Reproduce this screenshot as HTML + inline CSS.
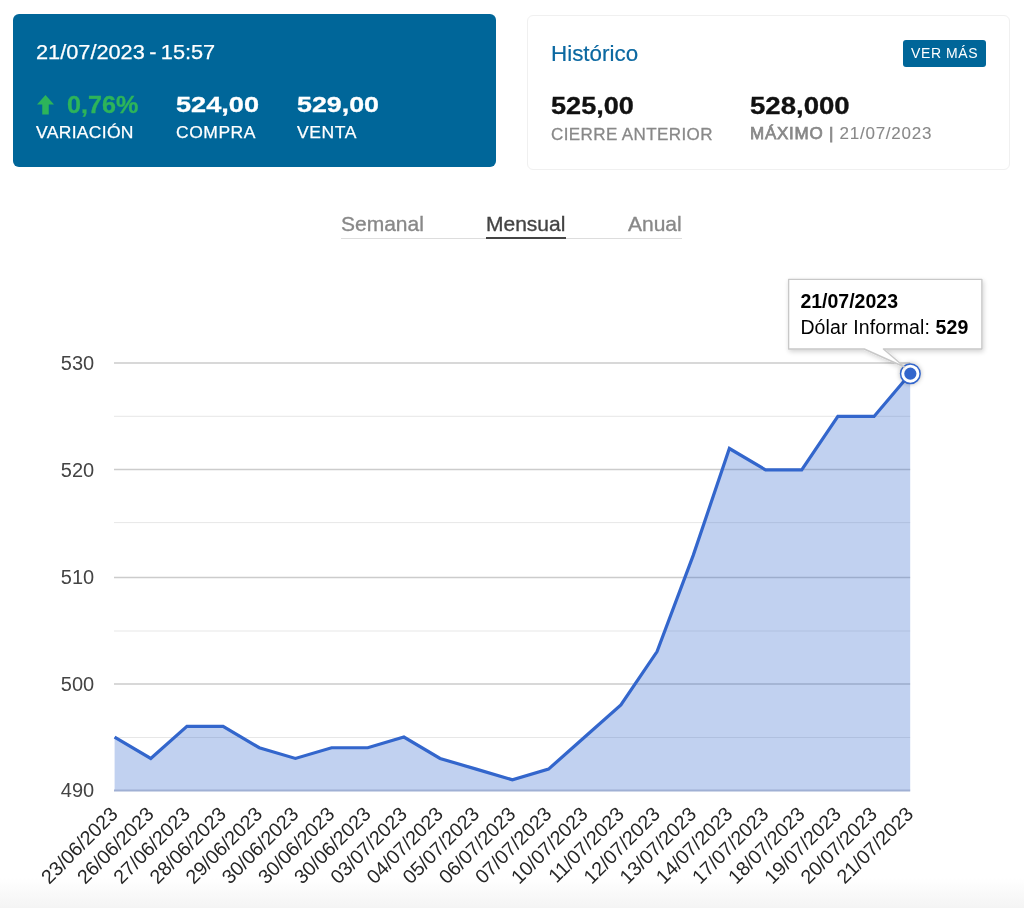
<!DOCTYPE html>
<html><head><meta charset="utf-8">
<style>
html,body{margin:0;padding:0;background:#fff;width:1024px;height:908px;overflow:hidden;position:relative;font-family:"Liberation Sans", sans-serif;}
.abs{position:absolute;white-space:nowrap;line-height:1;will-change:transform;}
.card1{position:absolute;left:13px;top:14px;width:483px;height:153px;background:#006699;border-radius:6px;}
.card2{position:absolute;left:527px;top:15px;width:481px;height:152.5px;background:#fff;border:1px solid #f0f0f0;border-radius:6px;}
.btn{position:absolute;left:903px;top:39.5px;width:83px;height:27px;background:#006699;border-radius:3px;}
.shade{position:absolute;left:0;top:878px;width:1024px;height:30px;background:linear-gradient(#fff,#f4f4f4);}
</style></head><body>
<div class="card1"></div>
<div class="abs" style="left:35.5px;top:41px;font-size:21px;color:#fff;transform:scaleX(1.035);transform-origin:0 0;-webkit-text-stroke:0.25px #fff;">21/07/2023<span style="word-spacing:-1.6px"> - </span>15:57</div>
<svg class="abs" style="left:36.9px;top:94.8px" width="17" height="19.6" viewBox="0 0 17 19.6"><path d="M8.5 0 L17 9.6 L11.75 9.6 L11.75 19.6 L5.25 19.6 L5.25 9.6 L0 9.6 Z" fill="#2db45a"/></svg>
<div class="abs" style="left:66.5px;top:94px;font-size:23px;color:#2db45a;font-weight:700;transform:scaleX(1.094);transform-origin:0 0;-webkit-text-stroke:0.3px #2db45a;">0,76%</div>
<div class="abs" style="left:35.5px;top:124px;font-size:17px;color:#fff;letter-spacing:0.3px;transform:scaleX(1.03);transform-origin:0 0;-webkit-text-stroke:0.25px #fff;">VARIACIÓN</div>
<div class="abs" style="left:175.5px;top:94.2px;font-size:22.5px;color:#fff;font-weight:700;transform:scaleX(1.206);transform-origin:0 0;-webkit-text-stroke:0.3px #fff;">524,00</div>
<div class="abs" style="left:175.5px;top:124px;font-size:17px;color:#fff;letter-spacing:0.5px;transform:scaleX(1.03);transform-origin:0 0;-webkit-text-stroke:0.25px #fff;">COMPRA</div>
<div class="abs" style="left:296.5px;top:94.2px;font-size:22.5px;color:#fff;font-weight:700;transform:scaleX(1.191);transform-origin:0 0;-webkit-text-stroke:0.3px #fff;">529,00</div>
<div class="abs" style="left:296.5px;top:124px;font-size:17px;color:#fff;letter-spacing:0.6px;transform:scaleX(1.03);transform-origin:0 0;-webkit-text-stroke:0.25px #fff;">VENTA</div>
<div class="card2"></div>
<div class="abs" style="left:550.5px;top:42.5px;font-size:22px;color:#0b68a1;transform:scaleX(1.018);transform-origin:0 0;-webkit-text-stroke:0.2px #0b68a1;">Histórico</div>
<div class="btn"></div>
<div class="abs" style="left:911px;top:46.2px;font-size:14px;color:#fff;letter-spacing:0.6px;">VER MÁS</div>
<div class="abs" style="left:550.5px;top:95px;font-size:23px;color:#111;font-weight:700;transform:scaleX(1.178);transform-origin:0 0;-webkit-text-stroke:0.3px #111;">525,00</div>
<div class="abs" style="left:550.5px;top:125.5px;font-size:17px;color:#888;letter-spacing:0.4px;-webkit-text-stroke:0.3px #888;">CIERRE ANTERIOR</div>
<div class="abs" style="left:749.5px;top:95px;font-size:23px;color:#111;font-weight:700;transform:scaleX(1.199);transform-origin:0 0;-webkit-text-stroke:0.3px #111;">528,000</div>
<div class="abs" style="left:749.5px;top:124.5px;font-size:17px;color:#888;letter-spacing:0.75px;-webkit-text-stroke:0.1px #888;"><span style="-webkit-text-stroke:0.75px #888">MÁXIMO |</span> 21/07/2023</div>
<div class="abs" style="left:341px;top:212.6px;font-size:21px;color:#888;-webkit-text-stroke:0.35px #888;">Semanal</div>
<div class="abs" style="left:486px;top:212.6px;font-size:21px;color:#444;-webkit-text-stroke:0.35px #444;">Mensual</div>
<div class="abs" style="left:628px;top:212.6px;font-size:21px;color:#888;-webkit-text-stroke:0.35px #888;">Anual</div>
<div style="position:absolute;left:341px;top:238px;width:341px;height:1px;background:#dddddd"></div>
<div style="position:absolute;left:486px;top:237px;width:80px;height:2px;background:#444"></div>
<div class="shade"></div>
<svg width="1024" height="908" viewBox="0 0 1024 908" style="position:absolute;left:0;top:0;will-change:transform">
<rect x="114.00" y="737.00" width="796.20" height="1" fill="#e7e7e7"/>
<rect x="114.00" y="630.50" width="796.20" height="1" fill="#e7e7e7"/>
<rect x="114.00" y="522.10" width="796.20" height="1" fill="#e7e7e7"/>
<rect x="114.00" y="415.80" width="796.20" height="1" fill="#e7e7e7"/>
<rect x="114.00" y="683.25" width="796.20" height="1.5" fill="#cccccc"/>
<rect x="114.00" y="576.75" width="796.20" height="1.5" fill="#cccccc"/>
<rect x="114.00" y="468.75" width="796.20" height="1.5" fill="#cccccc"/>
<rect x="114.00" y="362.25" width="796.20" height="1.5" fill="#cccccc"/>
<polygon points="114.60,790.50 114.60,737.06 150.76,758.44 186.93,726.38 223.09,726.38 259.25,747.75 295.42,758.44 331.58,747.75 367.75,747.75 403.91,737.06 440.07,758.44 476.24,769.12 512.40,779.81 548.56,769.12 584.73,737.06 620.89,705.00 657.05,651.56 693.22,555.38 729.38,448.50 765.55,469.88 801.71,469.88 837.87,416.44 874.04,416.44 910.20,373.69 910.20,790.50" fill="#3366cc" fill-opacity="0.3"/>
<rect x="114.00" y="789.50" width="796.20" height="2" fill="#a0b0d4"/>
<polyline points="114.60,737.06 150.76,758.44 186.93,726.38 223.09,726.38 259.25,747.75 295.42,758.44 331.58,747.75 367.75,747.75 403.91,737.06 440.07,758.44 476.24,769.12 512.40,779.81 548.56,769.12 584.73,737.06 620.89,705.00 657.05,651.56 693.22,555.38 729.38,448.50 765.55,469.88 801.71,469.88 837.87,416.44 874.04,416.44 910.20,373.69" fill="none" stroke="#3366cc" stroke-width="3.2" stroke-linejoin="miter"/>
<text x="94.2" y="797.40" text-anchor="end" font-family='"Liberation Sans", sans-serif' font-size="20" fill="#444">490</text>
<text x="94.2" y="690.52" text-anchor="end" font-family='"Liberation Sans", sans-serif' font-size="20" fill="#444">500</text>
<text x="94.2" y="583.65" text-anchor="end" font-family='"Liberation Sans", sans-serif' font-size="20" fill="#444">510</text>
<text x="94.2" y="476.77" text-anchor="end" font-family='"Liberation Sans", sans-serif' font-size="20" fill="#444">520</text>
<text x="94.2" y="369.90" text-anchor="end" font-family='"Liberation Sans", sans-serif' font-size="20" fill="#444">530</text>
<text x="118.90" y="815.20" text-anchor="end" transform="rotate(-45 118.90 815.20)" font-family='"Liberation Sans", sans-serif' font-size="19.7" fill="#262626">23/06/2023</text>
<text x="155.06" y="815.20" text-anchor="end" transform="rotate(-45 155.06 815.20)" font-family='"Liberation Sans", sans-serif' font-size="19.7" fill="#262626">26/06/2023</text>
<text x="191.23" y="815.20" text-anchor="end" transform="rotate(-45 191.23 815.20)" font-family='"Liberation Sans", sans-serif' font-size="19.7" fill="#262626">27/06/2023</text>
<text x="227.39" y="815.20" text-anchor="end" transform="rotate(-45 227.39 815.20)" font-family='"Liberation Sans", sans-serif' font-size="19.7" fill="#262626">28/06/2023</text>
<text x="263.55" y="815.20" text-anchor="end" transform="rotate(-45 263.55 815.20)" font-family='"Liberation Sans", sans-serif' font-size="19.7" fill="#262626">29/06/2023</text>
<text x="299.72" y="815.20" text-anchor="end" transform="rotate(-45 299.72 815.20)" font-family='"Liberation Sans", sans-serif' font-size="19.7" fill="#262626">30/06/2023</text>
<text x="335.88" y="815.20" text-anchor="end" transform="rotate(-45 335.88 815.20)" font-family='"Liberation Sans", sans-serif' font-size="19.7" fill="#262626">30/06/2023</text>
<text x="372.05" y="815.20" text-anchor="end" transform="rotate(-45 372.05 815.20)" font-family='"Liberation Sans", sans-serif' font-size="19.7" fill="#262626">30/06/2023</text>
<text x="408.21" y="815.20" text-anchor="end" transform="rotate(-45 408.21 815.20)" font-family='"Liberation Sans", sans-serif' font-size="19.7" fill="#262626">03/07/2023</text>
<text x="444.37" y="815.20" text-anchor="end" transform="rotate(-45 444.37 815.20)" font-family='"Liberation Sans", sans-serif' font-size="19.7" fill="#262626">04/07/2023</text>
<text x="480.54" y="815.20" text-anchor="end" transform="rotate(-45 480.54 815.20)" font-family='"Liberation Sans", sans-serif' font-size="19.7" fill="#262626">05/07/2023</text>
<text x="516.70" y="815.20" text-anchor="end" transform="rotate(-45 516.70 815.20)" font-family='"Liberation Sans", sans-serif' font-size="19.7" fill="#262626">06/07/2023</text>
<text x="552.86" y="815.20" text-anchor="end" transform="rotate(-45 552.86 815.20)" font-family='"Liberation Sans", sans-serif' font-size="19.7" fill="#262626">07/07/2023</text>
<text x="589.03" y="815.20" text-anchor="end" transform="rotate(-45 589.03 815.20)" font-family='"Liberation Sans", sans-serif' font-size="19.7" fill="#262626">10/07/2023</text>
<text x="625.19" y="815.20" text-anchor="end" transform="rotate(-45 625.19 815.20)" font-family='"Liberation Sans", sans-serif' font-size="19.7" fill="#262626">11/07/2023</text>
<text x="661.35" y="815.20" text-anchor="end" transform="rotate(-45 661.35 815.20)" font-family='"Liberation Sans", sans-serif' font-size="19.7" fill="#262626">12/07/2023</text>
<text x="697.52" y="815.20" text-anchor="end" transform="rotate(-45 697.52 815.20)" font-family='"Liberation Sans", sans-serif' font-size="19.7" fill="#262626">13/07/2023</text>
<text x="733.68" y="815.20" text-anchor="end" transform="rotate(-45 733.68 815.20)" font-family='"Liberation Sans", sans-serif' font-size="19.7" fill="#262626">14/07/2023</text>
<text x="769.85" y="815.20" text-anchor="end" transform="rotate(-45 769.85 815.20)" font-family='"Liberation Sans", sans-serif' font-size="19.7" fill="#262626">17/07/2023</text>
<text x="806.01" y="815.20" text-anchor="end" transform="rotate(-45 806.01 815.20)" font-family='"Liberation Sans", sans-serif' font-size="19.7" fill="#262626">18/07/2023</text>
<text x="842.17" y="815.20" text-anchor="end" transform="rotate(-45 842.17 815.20)" font-family='"Liberation Sans", sans-serif' font-size="19.7" fill="#262626">19/07/2023</text>
<text x="878.34" y="815.20" text-anchor="end" transform="rotate(-45 878.34 815.20)" font-family='"Liberation Sans", sans-serif' font-size="19.7" fill="#262626">20/07/2023</text>
<text x="914.50" y="815.20" text-anchor="end" transform="rotate(-45 914.50 815.20)" font-family='"Liberation Sans", sans-serif' font-size="19.7" fill="#262626">21/07/2023</text>
<defs><filter id="sh" x="-20%" y="-20%" width="140%" height="140%"><feGaussianBlur in="SourceAlpha" stdDeviation="2.5"/><feOffset dx="1" dy="2"/><feComponentTransfer><feFuncA type="linear" slope="0.18"/></feComponentTransfer><feMerge><feMergeNode/><feMergeNode in="SourceGraphic"/></feMerge></filter><filter id="blur2" x="-50%" y="-50%" width="200%" height="200%"><feGaussianBlur stdDeviation="2"/></filter></defs>
<circle cx="910.35" cy="373.69" r="11" fill="#000" fill-opacity="0.22" filter="url(#blur2)"/>
<circle cx="910.35" cy="373.69" r="9.8" fill="#fff" stroke="#3366cc" stroke-width="1.5"/>
<circle cx="910.35" cy="373.69" r="6.1" fill="#3366cc"/>
<path d="M788.6,279.4 H981.9 V349.0 H883.4 L904.5,367 L864.3,349.0 H788.6 Z" fill="#fff" stroke="#c8c8c8" stroke-width="1.4" stroke-linejoin="round" filter="url(#sh)"/>
<text x="800.4" y="307.8" font-family='"Liberation Sans", sans-serif' font-size="19.5" font-weight="bold" fill="#000">21/07/2023</text>
<text x="800.4" y="333.8" font-family='"Liberation Sans", sans-serif' font-size="19.5" fill="#000" letter-spacing="0.12">Dólar Informal: <tspan font-weight="bold">529</tspan></text>
</svg>
</body></html>
